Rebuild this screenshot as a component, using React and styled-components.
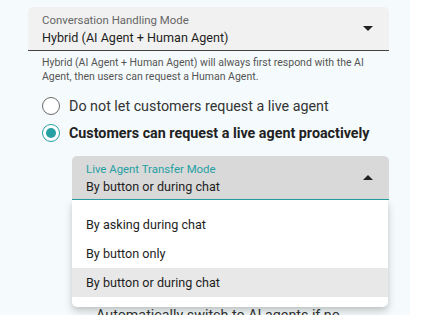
import styled, { createGlobalStyle } from "styled-components";

const GlobalStyle = createGlobalStyle`
  body {
    margin: 0;
    background: #ffffff;
    font-family: Roboto, "Liberation Sans", sans-serif;
    color: #222;
  }
`;

const TEAL = "#26a0a3";

export default function App() {
  return (
    <>
      <GlobalStyle />
      <Panel>
        <SelectBox>
          <FieldText>
            <FieldLabel>Conversation Handling Mode</FieldLabel>
            <FieldValue>Hybrid (AI Agent + Human Agent)</FieldValue>
          </FieldText>
          <Caret />
        </SelectBox>
        <Helper>
          Hybrid (AI Agent + Human Agent) will always first respond with the AI
          Agent, then users can request a Human Agent.
        </Helper>

        <RadioGroup>
          <RadioRow>
            <Radio />
            <RadioLabel>Do not let customers request a live agent</RadioLabel>
          </RadioRow>
          <RadioRow>
            <Radio checked />
            <RadioLabel bold>Customers can request a live agent proactively</RadioLabel>
          </RadioRow>
        </RadioGroup>

        <SubSection>
          <SelectWrap>
            <SelectBox focused>
              <FieldText>
                <FieldLabel focused>Live Agent Transfer Mode</FieldLabel>
                <FieldValue>By button or during chat</FieldValue>
              </FieldText>
              <Caret up />
            </SelectBox>
            <Menu>
              <MenuItem>By asking during chat</MenuItem>
              <MenuItem>By button only</MenuItem>
              <MenuItem selected>By button or during chat</MenuItem>
            </Menu>
          </SelectWrap>
          <CheckRow>Automatically switch to AI agents if no live agents are available</CheckRow>
        </SubSection>
      </Panel>
    </>
  );
}

const Panel = styled.div`
  width: 410px;
  height: 315px;
  box-sizing: border-box;
  background: #f5fbfc;
  padding: 7px 21px 0 28px;
  overflow: hidden;
`;

const SelectBox = styled.div`
  display: flex;
  align-items: center;
  justify-content: space-between;
  height: 44px;
  box-sizing: border-box;
  padding: 0 16px 0 14px;
  border-radius: 5px 5px 0 0;
  background: ${(p) => (p.focused ? "#d9d9d9" : "#f1f1f1")};
  border-bottom: ${(p) => (p.focused ? `1.5px solid ${TEAL}` : "1px solid #444")};
`;

const FieldText = styled.div`
  display: flex;
  flex-direction: column;
  gap: 3px;
  padding-top: 2px;
`;

const FieldLabel = styled.span`
  font-size: 11.4px;
  line-height: 14px;
  color: ${(p) => (p.focused ? TEAL : "#666")};
`;

const FieldValue = styled.span`
  font-size: 12.6px;
  line-height: 16px;
  color: #1e1e1e;
`;

const Caret = styled.span`
  width: 0;
  height: 0;
  border-left: 5px solid transparent;
  border-right: 5px solid transparent;
  ${(p) => (p.up ? "border-bottom: 5px solid #222;" : "border-top: 5px solid #222;")}
`;

const Helper = styled.p`
  margin: 5px 0 0 14px;
  font-size: 10.5px;
  line-height: 13.5px;
  color: #555;
`;

const RadioGroup = styled.div`
  display: flex;
  flex-direction: column;
  gap: 9px;
  margin: 14px 0 0 14px;
`;

const RadioRow = styled.label`
  display: flex;
  align-items: center;
  gap: 9px;
`;

const Radio = styled.span`
  width: 18px;
  height: 18px;
  box-sizing: border-box;
  border-radius: 50%;
  border: 1.5px solid ${(p) => (p.checked ? TEAL : "#6a6a6a")};
  background: #fff;
  display: flex;
  align-items: center;
  justify-content: center;
  &::after {
    content: "";
    width: 10px;
    height: 10px;
    border-radius: 50%;
    background: ${(p) => (p.checked ? TEAL : "transparent")};
  }
`;

const RadioLabel = styled.span`
  font-size: 14.3px;
  line-height: 18px;
  font-weight: ${(p) => (p.bold ? 700 : 400)};
  color: ${(p) => (p.bold ? "#222" : "#333")};
`;

const SubSection = styled.div`
  margin: 14px 0 0 44px;
`;

const SelectWrap = styled.div`
  position: relative;
`;

const Menu = styled.ul`
  position: absolute;
  top: 44px;
  left: 0;
  right: 1px;
  margin: 0;
  padding: 10px 0 10px;
  list-style: none;
  background: #fff;
  border-radius: 0 0 5px 5px;
  box-shadow: 0 5px 8px rgba(0, 0, 0, 0.16), 0 2px 4px rgba(0, 0, 0, 0.08);
  z-index: 2;
`;

const MenuItem = styled.li`
  height: 29px;
  display: flex;
  align-items: center;
  padding: 0 14px;
  font-size: 12.6px;
  color: #1e1e1e;
  background: ${(p) => (p.selected ? "#e8e8e8" : "transparent")};
`;

const CheckRow = styled.div`
  width: 255px;
  margin: 106px 0 0 24px;
  font-size: 14.3px;
  line-height: 18px;
  color: #333;
`;
